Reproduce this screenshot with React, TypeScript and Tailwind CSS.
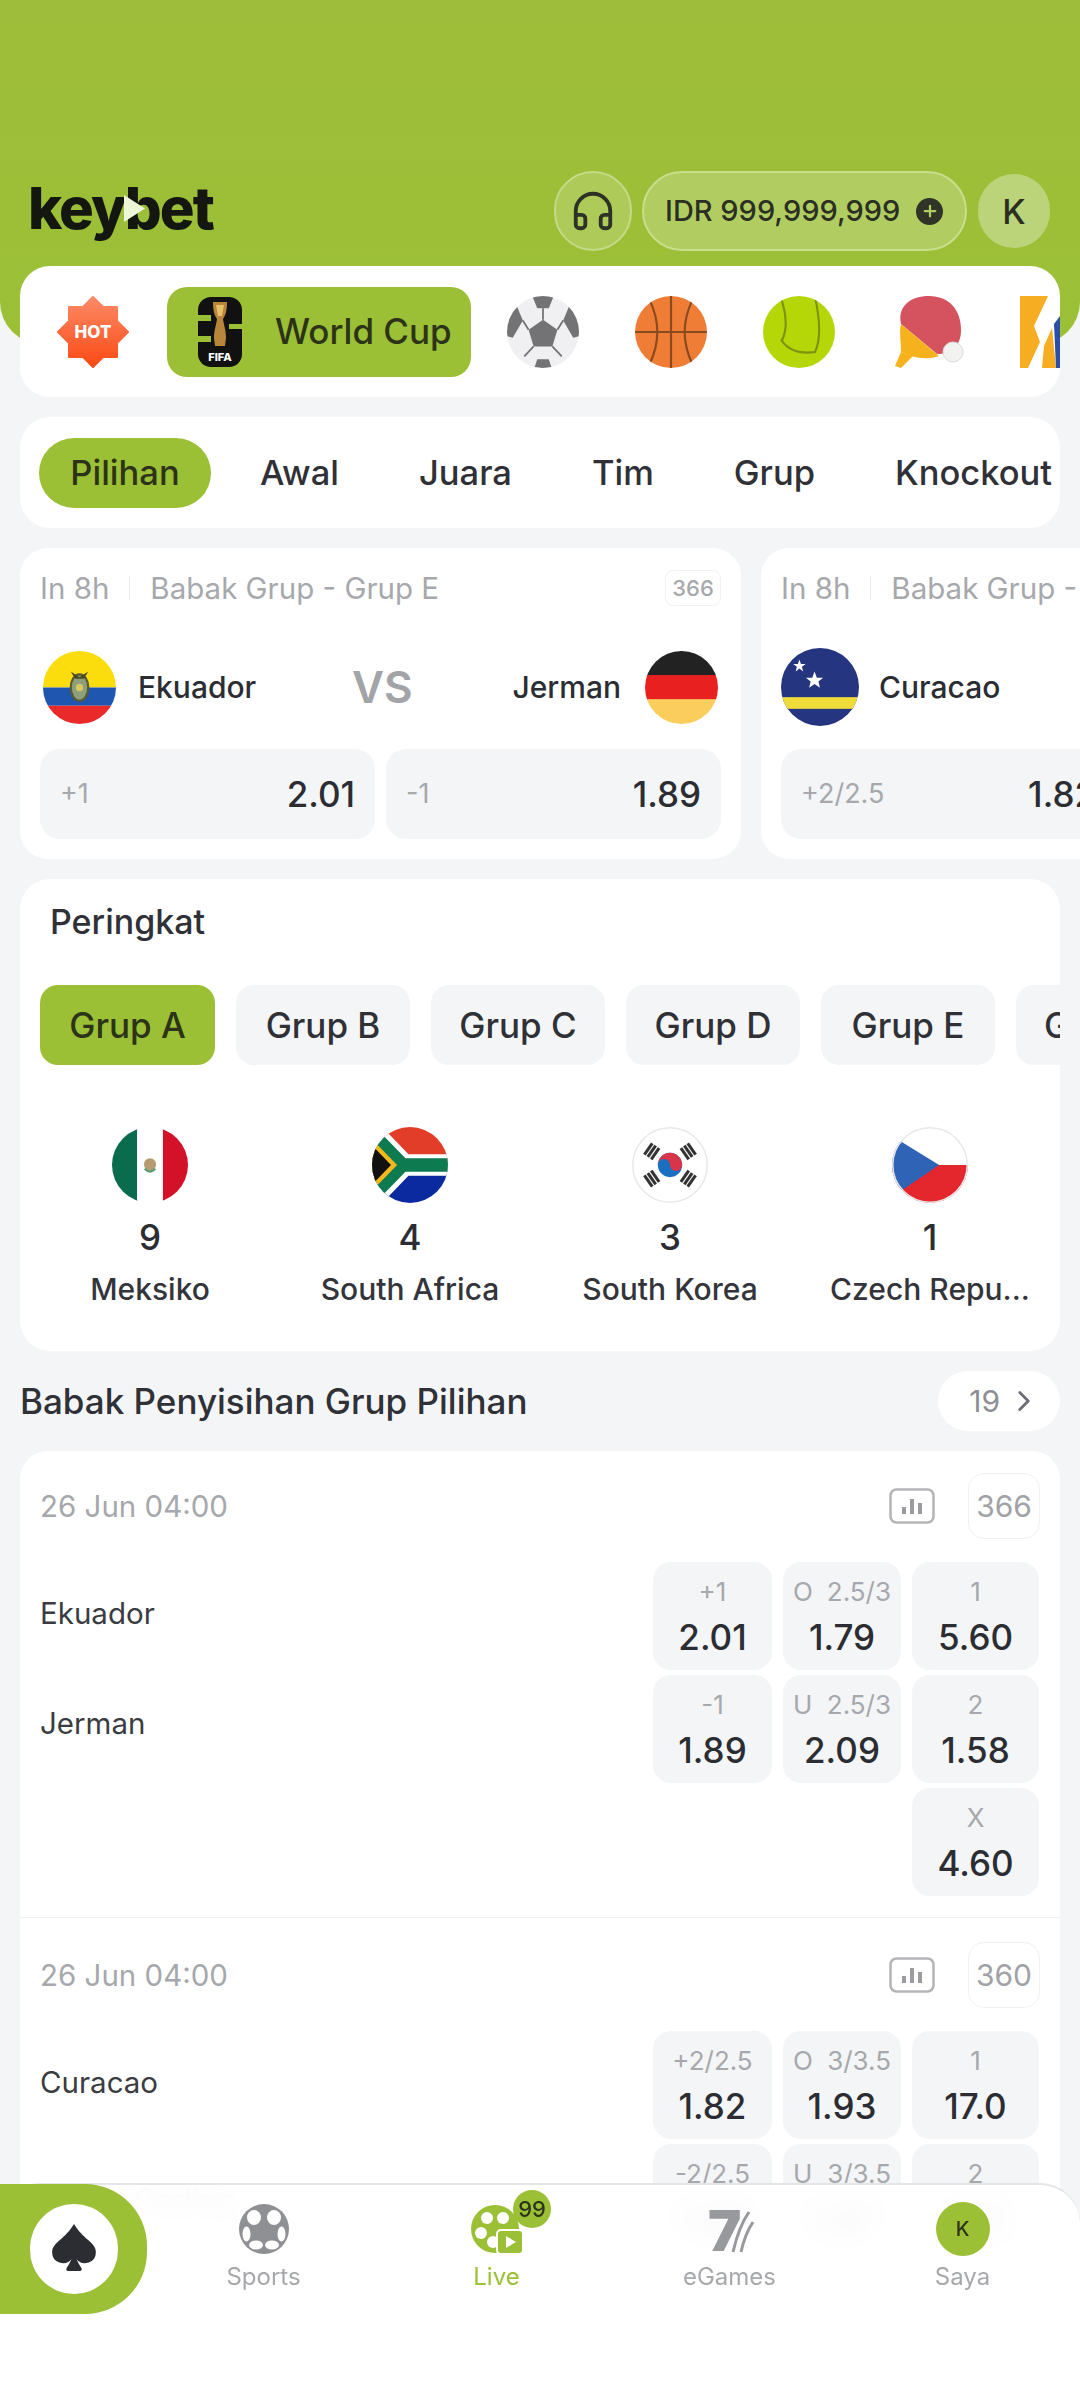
import { Headphones, ChevronRight, Plus } from "lucide-react";
import { BsSuitSpadeFill } from "react-icons/bs";
import type { ReactNode } from "react";

function Round({ id, size, children, ring }: { id: string; size: number; children: ReactNode; ring?: boolean }) {
  return (
    <svg width={size} height={size} viewBox="0 0 100 100" className="shrink-0">
      <defs>
        <clipPath id={id}>
          <circle cx="50" cy="50" r="50" />
        </clipPath>
      </defs>
      <g clipPath={`url(#${id})`}>{children}</g>
      {ring && <circle cx="50" cy="50" r="49" fill="none" stroke="#e9e9ec" strokeWidth="2" />}
    </svg>
  );
}

function Ecuador({ id, size }: { id: string; size: number }) {
  return (
    <Round id={id} size={size}>
      <rect width="100" height="50" fill="#fbdd0e" />
      <rect y="50" width="100" height="25" fill="#1f56b0" />
      <rect y="75" width="100" height="25" fill="#ea2a2a" />
      <ellipse cx="50" cy="50" rx="12" ry="18" fill="#8f9f7a" stroke="#5a5a32" strokeWidth="3" />
      <path d="M38 28 L50 36 L62 28 L56 38 H44 Z" fill="#4a4a25" />
      <circle cx="50" cy="50" r="5" fill="#d8c860" />
    </Round>
  );
}
function Germany({ id, size }: { id: string; size: number }) {
  return (
    <Round id={id} size={size}>
      <rect width="100" height="34" fill="#222" />
      <rect y="33" width="100" height="34" fill="#e8201f" />
      <rect y="66" width="100" height="34" fill="#fbcd5c" />
    </Round>
  );
}
function Curacao({ id, size }: { id: string; size: number }) {
  return (
    <Round id={id} size={size}>
      <rect width="100" height="100" fill="#26357f" />
      <rect y="63" width="100" height="15" fill="#efdc3a" />
      <polygon points="27,16 29.5,23 37,23 31,27.5 33,35 27,30.5 21,35 23,27.5 17,23 24.5,23" fill="#fff" transform="translate(2,2) scale(0.8)" />
      <polygon points="43,30 46,38 54,38 48,43 50,51 43,46 36,51 38,43 32,38 40,38" fill="#fff" />
    </Round>
  );
}
function Mexico({ id, size }: { id: string; size: number }) {
  return (
    <Round id={id} size={size}>
      <rect width="34" height="100" fill="#0b6b4d" />
      <rect x="33" width="34" height="100" fill="#fff" />
      <rect x="67" width="33" height="100" fill="#d31129" />
      <circle cx="50" cy="49" r="8" fill="#b59a72" />
      <path d="M43 55 Q50 62 57 55" stroke="#5a9a72" strokeWidth="3" fill="none" />
    </Round>
  );
}
function SouthAfrica({ id, size }: { id: string; size: number }) {
  return (
    <Round id={id} size={size}>
      <rect width="100" height="50" fill="#e23d28" />
      <rect y="50" width="100" height="50" fill="#0b2aa0" />
      <path d="M0 -14 L48 36 H100 V64 H48 L0 114 Z" fill="#fff" />
      <path d="M0 -4 L44 41 H100 V59 H44 L0 104 Z" fill="#0d7a4f" />
      <path d="M0 16 L33 50 L0 84 Z" fill="#f5b81c" />
      <path d="M0 24 L25 50 L0 76 Z" fill="#111" />
    </Round>
  );
}
function Korea({ id, size }: { id: string; size: number }) {
  const bars = (x: number, y: number, r: number, k: string) => (
    <g key={k} transform={`translate(${x} ${y}) rotate(${r})`} fill="#333">
      <rect x="-9" y="-7.5" width="18" height="4" />
      <rect x="-9" y="-2" width="18" height="4" />
      <rect x="-9" y="3.5" width="18" height="4" />
    </g>
  );
  return (
    <Round id={id} size={size} ring>
      <rect width="100" height="100" fill="#fff" />
      {bars(26, 32, -55, "a")}
      {bars(74, 32, 55, "b")}
      {bars(26, 68, 55, "c")}
      {bars(74, 68, -55, "d")}
      <circle cx="50" cy="50" r="16" fill="#1a6fc0" />
      <path d="M34 50 A16 16 0 0 1 66 50 A8 8 0 0 1 50 50 A8 8 0 0 0 34 50" fill="#d8344a" />
    </Round>
  );
}
function Czech({ id, size }: { id: string; size: number }) {
  return (
    <Round id={id} size={size} ring>
      <rect width="100" height="50" fill="#fff" />
      <rect y="50" width="100" height="50" fill="#e4262d" />
      <path d="M0 12 L62 50 L0 92 Z" fill="#2f63b5" />
    </Round>
  );
}

function HotBadge() {
  return (
    <svg width="72" height="72" viewBox="0 0 72 72" className="shrink-0">
      <defs>
        <linearGradient id="hotg" x1="0" y1="0" x2="0" y2="1">
          <stop offset="0" stopColor="#fc8a66" />
          <stop offset="1" stopColor="#fb4a14" />
        </linearGradient>
      </defs>
      <polygon
        points="36,1 46,11 60,11 60,25 71,36 60,47 60,61 46,61 36,71 26,61 12,61 12,47 1,36 12,25 12,11 26,11"
        fill="url(#hotg)"
        stroke="url(#hotg)"
        strokeWidth="2"
        strokeLinejoin="round"
      />
      <text x="36" y="42" textAnchor="middle" fontSize="17" fontWeight="800" fill="#fff" fontFamily="Inter">
        HOT
      </text>
    </svg>
  );
}

function Fifa26() {
  return (
    <svg width="46" height="72" viewBox="0 0 46 72" className="shrink-0">
      <rect x="1" y="1" width="44" height="70" rx="13" fill="#111" />
      <path d="M0 19 H14 V25 H0 Z M32 28 H46 V33 H32 Z M0 40 H14 V46 H0 Z" fill="#9bbf35" />
      <path d="M16 6 H30 C30 16 28 20 26 23 C27 30 29 34 29 42 L28 50 H18 L17 42 C17 34 19 30 20 23 C18 20 16 16 16 6 Z" fill="#b7863a" />
      <path d="M19 9 H27 L25 20 H21 Z" fill="#e7c168" />
      <text x="23" y="65" textAnchor="middle" fontSize="11" fontWeight="800" fill="#fff" fontFamily="Inter">
        FIFA
      </text>
    </svg>
  );
}

function Soccer({ size = 72, gray = false }: { size?: number; gray?: boolean }) {
  const d = gray ? "#8f9094" : "#737376";
  const l = "#ffffff";
  return (
    <Round id={gray ? "ballnav" : "ballcat"} size={size}>
      <rect width="100" height="100" fill={gray ? "#8f9094" : "#f0f0f2"} />
      {gray ? (
        <>
          <ellipse cx="30" cy="27" rx="14" ry="15" fill={l} />
          <ellipse cx="70" cy="27" rx="14" ry="15" fill={l} />
          <ellipse cx="15" cy="60" rx="8" ry="15" fill={l} />
          <ellipse cx="85" cy="60" rx="8" ry="15" fill={l} />
          <ellipse cx="34" cy="82" rx="14" ry="9" fill={l} />
          <ellipse cx="66" cy="82" rx="14" ry="9" fill={l} />
        </>
      ) : (
        <>
          <polygon points="50,33 70,47 63,70 37,70 30,47" fill={d} />
          <polygon points="35,0 65,0 58,17 42,17" fill={d} />
          <polygon points="0,14 12,10 22,34 8,58 0,56" fill={d} />
          <polygon points="100,14 88,10 78,34 92,58 100,56" fill={d} />
          <polygon points="38,100 62,100 58,88 42,88" fill={d} />
          <path d="M50 33 V17 M30 47 L22 34 M70 47 L78 34 M37 70 L24 84 M63 70 L76 84" stroke={d} strokeWidth="2.5" />
        </>
      )}
    </Round>
  );
}
function Basketball() {
  return (
    <Round id="bb" size={72}>
      <rect width="100" height="100" fill="#ef7d35" />
      <g stroke="#8a4a20" strokeWidth="3" fill="none">
        <path d="M0 50 H100 M50 0 V100" />
        <path d="M20 5 Q42 50 20 95 M80 5 Q58 50 80 95" />
      </g>
    </Round>
  );
}
function Tennis() {
  return (
    <Round id="tn" size={72}>
      <rect width="100" height="100" fill="#b5d708" />
      <g stroke="#7d9410" strokeWidth="3" fill="none">
        <path d="M24 0 Q38 40 26 62 Q40 82 72 78 Q84 55 72 0" />
      </g>
    </Round>
  );
}
function Paddle() {
  return (
    <svg width="72" height="72" viewBox="0 0 72 72" className="shrink-0">
      <path d="M8 56 L2 70 L8 72 L20 60 Z" fill="#f6b21c" />
      <path d="M8 28 C4 10 18 0 36 0 C56 0 68 14 68 34 C68 50 58 58 44 58 L8 28 Z" fill="#d4535e" />
      <path d="M8 28 L46 60 C36 64 24 62 18 60 L8 56 C8 44 6 36 8 28 Z" fill="#f6b21c" />
      <circle cx="60" cy="56" r="10" fill="#f2f3f0" stroke="#dbdcd7" />
    </svg>
  );
}
function LastSport() {
  return (
    <svg width="40" height="72" viewBox="0 0 40 72" className="shrink-0">
      <path d="M0 0 H28 L14 30 L20 46 L8 72 H0 Z" fill="#f6ad22" />
      <path d="M24 50 L32 32 L36 72 H22 Z" fill="#f6ad22" />
      <path d="M34 28 L40 20 V72 H36 Z" fill="#2a4fa8" />
    </svg>
  );
}

function Odd({ label, value }: { label: ReactNode; value: string }) {
  return (
    <div className="flex h-[108px] flex-col items-center justify-center rounded-[18px] bg-[#f4f5f7]">
      <div className="flex h-[38px] w-full items-center justify-center text-[26px] leading-none text-[#a6a8ac]">{label}</div>
      <div className="mt-[4px] text-[35px] leading-[44px] font-medium text-[#2b2d33]">{value}</div>
    </div>
  );
}
function OU({ a, b }: { a: string; b: string }) {
  return (
    <span className="flex w-full justify-between px-[10px]">
      <span>{a}</span>
      <span>{b}</span>
    </span>
  );
}

function Stats() {
  return (
    <svg width="46" height="36" viewBox="0 0 46 36" className="shrink-0">
      <rect x="1.5" y="1.5" width="43" height="33" rx="6" fill="none" stroke="#b3b5b8" strokeWidth="2.5" />
      <path d="M15 19 V26 M23 11 V26 M31 15 V26" stroke="#9a9c9f" strokeWidth="4" />
    </svg>
  );
}

function MatchRow({
  time,
  count,
  home,
  away,
  rows,
  border,
}: {
  time: string;
  count: string;
  home: string;
  away: ReactNode;
  rows: { label: ReactNode; value: string }[][];
  border?: boolean;
}) {
  return (
    <div className={border ? "-mx-[20px] border-b border-[#eff0f2] px-[20px] pb-[21px]" : ""}>
      <div className="flex h-[66px] items-center">
        <span className="text-[29.5px] text-[#a6a8ac]">{time}</span>
        <span className="ml-auto mr-[33px]">
          <Stats />
        </span>
        <span className="flex h-[66px] w-[72px] items-center justify-center rounded-[16px] border border-[#f0f1f3] text-[30px] text-[#a0a2a6]">
          {count}
        </span>
      </div>
      <div className="mt-[23px] flex">
        <div className="-mt-[3px] flex w-[613px] flex-col text-[29.5px] text-[#3a3c42]">
          <div className="flex h-[108px] items-center">{home}</div>
          <div className="mt-[2px] flex h-[108px] items-center">{away}</div>
        </div>
        <div className="grid grid-cols-[119px_118px_127px] gap-x-[11px] gap-y-[5px]">
          {rows.flat().map((o, i) =>
            o.value === "" ? <div key={i} /> : <Odd key={i} label={o.label} value={o.value} />
          )}
        </div>
      </div>
    </div>
  );
}

const tabs = ["Awal", "Juara", "Tim", "Grup", "Knockout"];
const groups = ["Grup B", "Grup C", "Grup D", "Grup E"];

function RankItem({ flag, n, name }: { flag: ReactNode; n: string; name: string }) {
  return (
    <div className="flex w-[260px] flex-col items-center">
      {flag}
      <div className="mt-[12px] text-[35px] leading-[44px] font-medium text-[#2b2d33]">{n}</div>
      <div className="mt-[10px] text-[30px] leading-[40px] font-medium text-[#33353b]">{name}</div>
    </div>
  );
}

function BigOdd({ label, value }: { label: string; value: string }) {
  return (
    <div className="flex h-[90px] flex-1 items-center justify-between rounded-[20px] bg-[#f4f5f7] px-[20px]">
      <span className="text-[27px] text-[#a6a8ac]">{label}</span>
      <span className="text-[35px] font-medium">{value}</span>
    </div>
  );
}

export default function App() {
  return (
    <div className="relative h-[2400px] w-[1080px] overflow-hidden bg-[#f3f5f7] font-['Inter','Noto_Sans',sans-serif] text-[#2b2d33]">
      {/* header */}
      <header className="flex h-[344px] items-start rounded-b-[42px] bg-gradient-to-b from-[#9ebd3a] to-[#9bc036] pl-[28px] pr-[30px] pt-[171px]">
        <div className="relative -mt-[1px] text-[58px] leading-[76px] font-extrabold tracking-[-2px] text-[#14170f]">
          keybet
          <svg width="22" height="27" viewBox="0 0 22 27" className="absolute left-[95px] top-[25px]">
            <polygon points="1,0 22,13.5 1,27" fill="#eef6d8" />
          </svg>
        </div>
        <div className="ml-auto flex items-center">
          <div className="flex h-[80px] w-[78px] items-center justify-center rounded-full border-2 border-[#c5da86] bg-[#aecb5a]">
            <Headphones size={46} strokeWidth={2} className="text-[#2e3226]" />
          </div>
          <div className="ml-[10px] flex h-[80px] w-[325px] items-center rounded-full border-2 border-[#c9de8c] bg-[#b1cd62] pl-[21px]">
            <span className="text-[29px] font-medium text-[#2b2f22]">IDR 999,999,999</span>
            <span className="ml-[16px] flex h-[27px] w-[27px] items-center justify-center rounded-full bg-[#2f3426]">
              <Plus size={18} strokeWidth={3} className="text-[#b1cd62]" />
            </span>
          </div>
          <div className="ml-[11px] flex h-[74px] w-[72px] items-center justify-center rounded-full bg-[#bbd47a] text-[34px] font-medium text-[#2b2f22]">
            K
          </div>
        </div>
      </header>

      {/* sports bar */}
      <div className="relative mx-[20px] -mt-[78px] flex h-[131px] items-center overflow-hidden rounded-[30px] bg-white">
        <div className="flex shrink-0 items-center">
          <span className="ml-[37px]">
            <HotBadge />
          </span>
          <div className="ml-[38px] flex h-[90px] w-[304px] shrink-0 items-center rounded-[20px] bg-[#9bbf35] pl-[30px]">
            <Fifa26 />
            <span className="ml-[32px] text-[35px] font-medium text-[#2d3319]">World Cup</span>
          </div>
          <span className="ml-[36px]">
            <Soccer />
          </span>
          <span className="ml-[56px]">
            <Basketball />
          </span>
          <span className="ml-[56px]">
            <Tennis />
          </span>
          <span className="ml-[58px]">
            <Paddle />
          </span>
          <span className="ml-[55px]">
            <LastSport />
          </span>
        </div>
      </div>

      {/* tabs */}
      <div className="mx-[20px] mt-[20px] flex h-[111px] items-center overflow-hidden rounded-[30px] bg-white pl-[19px]">
        <div className="flex h-[70px] w-[172px] shrink-0 items-center justify-center rounded-full bg-[#9bbf35] text-[34.5px] font-medium text-[#2d3319]">
          Pilihan
        </div>
        <div className="flex items-center gap-[80px] pl-[49px] text-[34.5px] font-medium text-[#2f3137]">
          {tabs.map((t) => (
            <span key={t} className="shrink-0">
              {t}
            </span>
          ))}
        </div>
      </div>

      {/* featured */}
      <div className="mt-[20px] flex gap-[20px] pl-[20px]">
        <div className="h-[311px] w-[721px] shrink-0 rounded-[28px] bg-white px-[20px] pt-[22px]">
          <div className="flex h-[36px] items-center text-[29.5px] text-[#a6a8ac]">
            <span>In 8h</span>
            <span className="mx-[20px] h-[24px] w-px bg-[#e8e9eb]" />
            <span>Babak Grup - Grup E</span>
            <span className="ml-auto flex h-[36px] w-[56px] items-center justify-center rounded-[8px] border border-[#f0f1f3] text-[22px] font-medium">
              366
            </span>
          </div>
          <div className="mt-[44px] flex h-[74px] items-center">
            <span className="ml-[3px]">
              <Ecuador id="ec1" size={73} />
            </span>
            <span className="ml-[22px] w-[214px] text-[30px] font-medium">Ekuador</span>
            <span className="text-[44px] font-semibold text-[#a2a4a8]">VS</span>
            <span className="ml-auto text-[30px] font-medium">Jerman</span>
            <span className="ml-[24px] mr-[3px]">
              <Germany id="de1" size={73} />
            </span>
          </div>
          <div className="mt-[25px] flex gap-[11px]">
            <BigOdd label="+1" value="2.01" />
            <BigOdd label="-1" value="1.89" />
          </div>
        </div>
        <div className="h-[311px] w-[721px] shrink-0 rounded-[28px] bg-white px-[20px] pt-[22px]">
          <div className="flex h-[36px] items-center text-[29.5px] text-[#a6a8ac]">
            <span>In 8h</span>
            <span className="mx-[20px] h-[24px] w-px bg-[#e8e9eb]" />
            <span>Babak Grup - Grup E</span>
          </div>
          <div className="mt-[42px] flex h-[78px] items-center">
            <Curacao id="cw1" size={78} />
            <span className="ml-[20px] text-[30px] font-medium">Curacao</span>
          </div>
          <div className="mt-[23px] flex gap-[11px]">
            <BigOdd label="+2/2.5" value="1.82" />
            <BigOdd label="-2/2.5" value="1.98" />
          </div>
        </div>
      </div>

      {/* ranking */}
      <section className="mx-[20px] mt-[20px] h-[472px] overflow-hidden rounded-[30px] bg-white">
        <h2 className="pl-[30px] pt-[23px] text-[34px] leading-[40px] font-medium text-[#2f3137]">Peringkat</h2>
        <div className="mt-[43px] flex gap-[21px] pl-[20px]">
          <div className="flex h-[80px] w-[175px] shrink-0 items-center justify-center rounded-[18px] bg-[#9bbf35] text-[35px] font-medium text-[#2d3319]">
            Grup A
          </div>
          {groups.map((g) => (
            <div
              key={g}
              className="flex h-[80px] w-[174px] shrink-0 items-center justify-center rounded-[18px] bg-[#f4f5f7] text-[35px] font-medium text-[#2f3137]"
            >
              {g}
            </div>
          ))}
          <div className="flex h-[80px] w-[174px] shrink-0 items-center rounded-[18px] bg-[#f4f5f7] pl-[28px] text-[35px] font-medium text-[#2f3137]">
            Grup F
          </div>
        </div>
        <div className="mt-[62px] flex">
          <RankItem flag={<Mexico id="mx" size={76} />} n="9" name="Meksiko" />
          <RankItem flag={<SouthAfrica id="za" size={76} />} n="4" name="South Africa" />
          <RankItem flag={<Korea id="kr" size={76} />} n="3" name="South Korea" />
          <RankItem flag={<Czech id="cz" size={76} />} n="1" name="Czech Repu..." />
        </div>
      </section>

      {/* section heading */}
      <div className="mx-[20px] mt-[20px] flex h-[60px] items-center justify-between">
        <h2 className="text-[35px] font-medium text-[#2f3137]">Babak Penyisihan Grup Pilihan</h2>
        <div className="flex h-[60px] w-[122px] items-center justify-end gap-[7px] rounded-full bg-white pr-[19px] text-[30px] text-[#8d8f94]">
          19
          <ChevronRight size={34} strokeWidth={2} className="text-[#6d6f74]" />
        </div>
      </div>

      {/* match list */}
      <section className="mx-[20px] mt-[20px] rounded-t-[28px] bg-white px-[20px] pt-[22px]">
        <MatchRow
          time="26 Jun 04:00"
          count="366"
          home="Ekuador"
          away="Jerman"
          border
          rows={[
            [
              { label: "+1", value: "2.01" },
              { label: <OU a="O" b="2.5/3" />, value: "1.79" },
              { label: "1", value: "5.60" },
            ],
            [
              { label: "-1", value: "1.89" },
              { label: <OU a="U" b="2.5/3" />, value: "2.09" },
              { label: "2", value: "1.58" },
            ],
            [
              { label: "", value: "" },
              { label: "", value: "" },
              { label: "X", value: "4.60" },
            ],
          ]}
        />
        <div className="pt-[24px]">
          <MatchRow
            time="26 Jun 04:00"
            count="360"
            home="Curacao"
            away={<span className="mt-[14px]">Pantai Gading</span>}
            rows={[
              [
                { label: "+2/2.5", value: "1.82" },
                { label: <OU a="O" b="3/3.5" />, value: "1.93" },
                { label: "1", value: "17.0" },
              ],
              [
                { label: "-2/2.5", value: "1.98" },
                { label: <OU a="U" b="3/3.5" />, value: "1.87" },
                { label: "2", value: "1.13" },
              ],
            ]}
          />
        </div>
      </section>

      {/* bottom nav */}
      <nav className="absolute bottom-0 left-0 h-[217px] w-[1080px] rounded-t-[40px] border-t-2 border-[#e4e5e7] bg-white/95 backdrop-blur-md">
        <div className="flex h-[130px] items-start">
          <div className="-mt-[1px] flex h-[130px] w-[147px] shrink-0 items-center rounded-r-[62px] bg-[#9bbf35] pl-[30px]">
            <div className="flex h-[90px] w-[88px] items-center justify-center rounded-full bg-white">
              <BsSuitSpadeFill size={50} className="text-[#2b2d33]" />
            </div>
          </div>
          <div className="flex w-[233px] shrink-0 flex-col items-center pt-[19px]">
            <Soccer size={50} gray />
            <span className="mt-[8px] text-[24px] leading-[30px] text-[#a6a8ac]">Sports</span>
          </div>
          <div className="relative flex w-[233px] shrink-0 flex-col items-center pt-[19px]">
            <svg width="52" height="50" viewBox="0 0 52 50">
              <circle cx="24" cy="25" r="24" fill="#9bbf35" />
              <circle cx="16" cy="14" r="6" fill="#fff" />
              <circle cx="32" cy="14" r="6" fill="#fff" />
              <circle cx="10" cy="29" r="6" fill="#fff" />
              <circle cx="22" cy="38" r="6" fill="#fff" />
              <rect x="26" y="26" width="26" height="24" rx="4" fill="#9bbf35" stroke="#fff" strokeWidth="2" />
              <polygon points="35,32 45,38 35,44" fill="#fff" />
            </svg>
            <span className="mt-[8px] text-[24px] leading-[30px] text-[#9bbf35]">Live</span>
            <span className="absolute left-[133px] top-[5px] flex h-[38px] w-[38px] items-center justify-center rounded-full bg-[#9bbf35] text-[22px] font-medium text-[#2d3319]">
              99
            </span>
          </div>
          <div className="flex w-[233px] shrink-0 flex-col items-center pt-[19px]">
            <svg width="50" height="50" viewBox="0 0 50 50">
              <text x="3" y="47" fontSize="56" fontWeight="900" fill="#98999d" fontFamily="Inter">
                7
              </text>
              <path d="M28 48 Q34 22 44 8 M36 48 Q40 30 48 18" fill="none" stroke="#98999d" strokeWidth="3" />
            </svg>
            <span className="mt-[8px] text-[24px] leading-[30px] text-[#a6a8ac]">eGames</span>
          </div>
          <div className="flex w-[233px] shrink-0 flex-col items-center pt-[17px]">
            <div className="flex h-[54px] w-[54px] items-center justify-center rounded-full bg-[#9bbf35] text-[20px] font-medium text-[#2d3319]">
              K
            </div>
            <span className="mt-[6px] text-[24px] leading-[30px] text-[#a6a8ac]">Saya</span>
          </div>
        </div>
      </nav>
    </div>
  );
}
